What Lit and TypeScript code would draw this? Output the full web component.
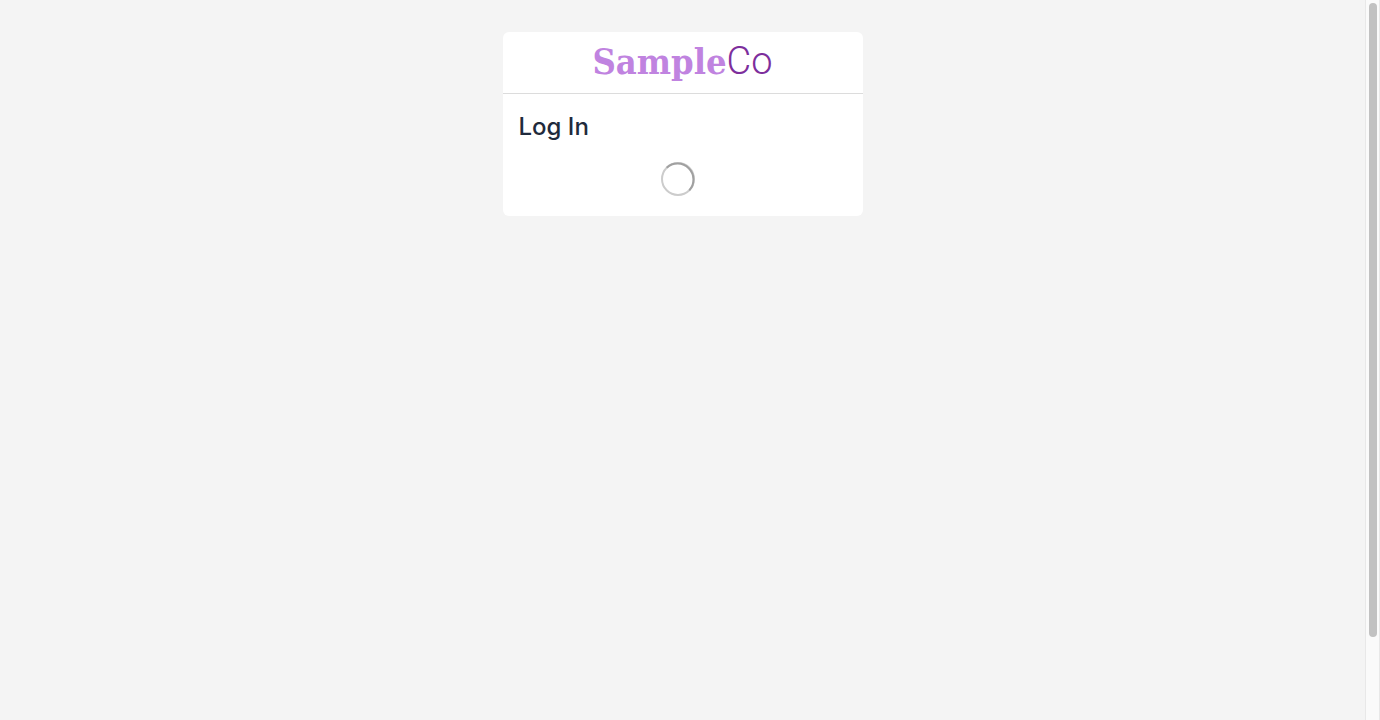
import { LitElement, html, css } from "lit";
import { customElement } from "lit/decorators.js";

@customElement("brand-logo")
class BrandLogo extends LitElement {
  static styles = css`
    :host {
      display: flex;
      align-items: baseline;
      justify-content: center;
      line-height: 48px;
      white-space: nowrap;
    }
    .strong {
      font-family: "DejaVu Serif Condensed", "DejaVu Serif", serif;
      font-weight: 700;
      font-size: 36px;
      color: #c083e0;
    }
    .light {
      font-family: Roboto, sans-serif;
      font-weight: 300;
      font-size: 38px;
      color: #7d2e9c;
    }
  `;
  render() {
    return html`<span class="strong">Sample</span><span class="light">Co</span>`;
  }
}

@customElement("loading-spinner")
class LoadingSpinner extends LitElement {
  static styles = css`
    :host {
      display: block;
    }
    svg {
      display: block;
    }
  `;
  render() {
    return html`
      <svg width="34" height="34" viewBox="0 0 34 34" fill="none" stroke-width="2" role="img" aria-label="Loading">
        <circle cx="17" cy="17" r="16" stroke="#cccccc" />
        <path d="M5.7 5.7A16 16 0 0 1 28.3 28.3" stroke="#a0a0a0" />
      </svg>
    `;
  }
}

@customElement("app-root")
class AppRoot extends LitElement {
  static styles = css`
    :host {
      display: flex;
      min-height: 100vh;
      background: #f4f4f4;
      font-family: Inter, sans-serif;
      color: #1f2a3c;
    }
    .page {
      flex: 1;
      padding: 32px 16px;
    }
    .card {
      max-width: 360px;
      margin: 0 auto;
      background: #fff;
      border-radius: 6px;
    }
    .header {
      padding: 5px 16px 8px;
      border-bottom: 1px solid #dcdcdc;
    }
    .body {
      padding: 16px 16px 20px;
    }
    .title {
      margin: 0;
      font-size: 24px;
      line-height: 34px;
      font-weight: 500;
    }
    .loading {
      display: flex;
      justify-content: center;
      padding: 18px 10px 0 0;
    }
    .scrollbar {
      box-sizing: border-box;
      width: 15px;
      height: 100vh;
      padding: 3px;
      background: #fafafa;
      border: solid #e8e8e8;
      border-width: 0 1px;
    }
    .thumb {
      width: 8px;
      height: 88.8%;
      border-radius: 4px;
      background: #c1c1c1;
    }
  `;
  render() {
    return html`
      <main class="page">
        <section class="card">
          <header class="header"><brand-logo></brand-logo></header>
          <div class="body">
            <h1 class="title">Log In</h1>
            <div class="loading"><loading-spinner></loading-spinner></div>
          </div>
        </section>
      </main>
      <div class="scrollbar" aria-hidden="true"><div class="thumb"></div></div>
    `;
  }
}
